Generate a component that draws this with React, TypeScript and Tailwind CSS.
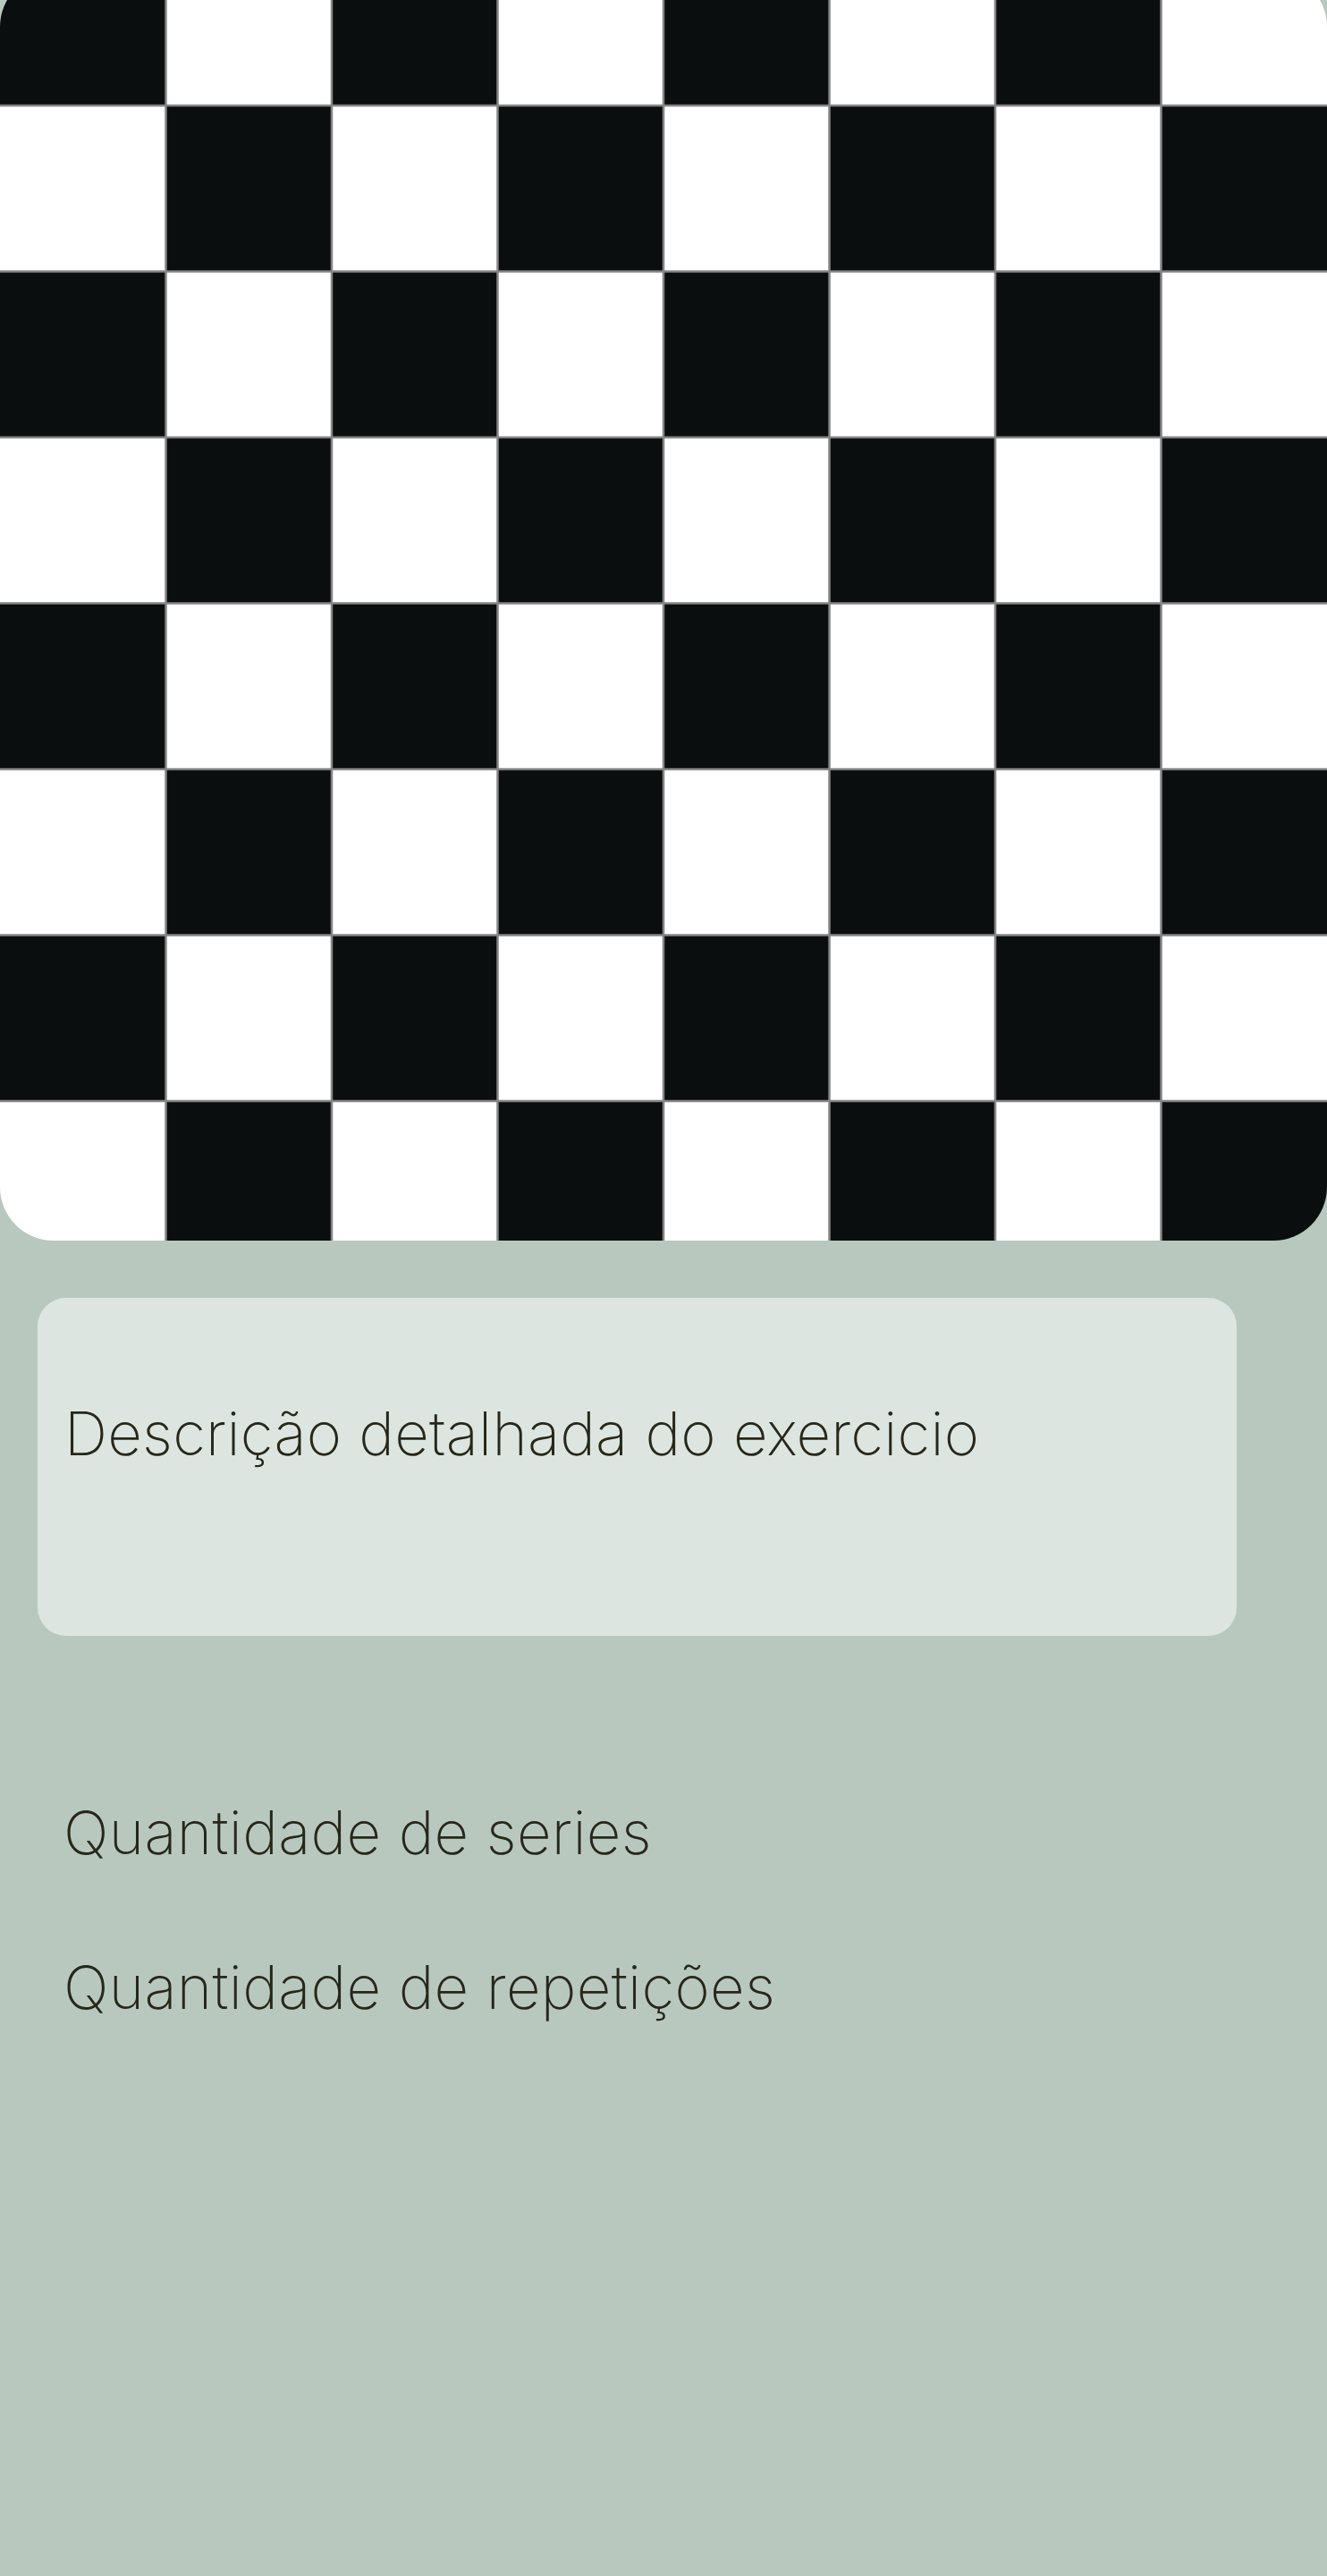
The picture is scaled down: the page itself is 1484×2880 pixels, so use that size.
import React from "react";

const S = 185.5;

function Board() {
  const rects: React.ReactNode[] = [];
  for (let r = 0; r < 8; r++) {
    for (let c = 0; c < 8; c++) {
      const dark = (r + c) % 2 === 0;
      rects.push(
        <rect key={`${r}-${c}`} x={c * S} y={r * S} width={S} height={S} fill={dark ? "#0a0e0e" : "#ffffff"} />
      );
    }
  }
  const lines: React.ReactNode[] = [];
  for (let i = 1; i < 8; i++) {
    lines.push(<line key={`v${i}`} x1={i * S} y1={0} x2={i * S} y2={1484} stroke="#858585" strokeWidth={2.5} />);
    lines.push(<line key={`h${i}`} x1={0} y1={i * S} x2={1484} y2={i * S} stroke="#858585" strokeWidth={2.5} />);
  }
  return (
    <div className="mt-[-30px] h-[1417px] w-full shrink-0 overflow-hidden rounded-[60px]">
      <svg width="1484" height="1417" viewBox="0 37.5 1484 1417" className="block">
        {rects}
        {lines}
      </svg>
    </div>
  );
}

export default function App() {
  return (
    <div
      className="flex min-h-[2880px] w-[1484px] flex-col bg-[#b8c8bf] text-[#27271a]"
      style={{ fontFamily: "Inter, 'Noto Sans', sans-serif" }}
    >
      <Board />
      <div className="ml-[42px] mt-[64px] h-[378px] w-[1341px] shrink-0 rounded-[32px] bg-[#dce5e0] pl-[30px] pt-[112px]">
        <p className="text-[67px] font-[160] leading-[80px] tracking-[0.25px]">Descrição detalhada do exercicio</p>
      </div>
      <div className="pl-[71px] pt-[180px]">
        <p className="text-[67px] font-[160] leading-[80px] tracking-[0.35px]">Quantidade de series</p>
        <p className="mt-[93px] text-[67px] font-[160] leading-[80px] tracking-[0.35px]">Quantidade de repetições</p>
      </div>
    </div>
  );
}
